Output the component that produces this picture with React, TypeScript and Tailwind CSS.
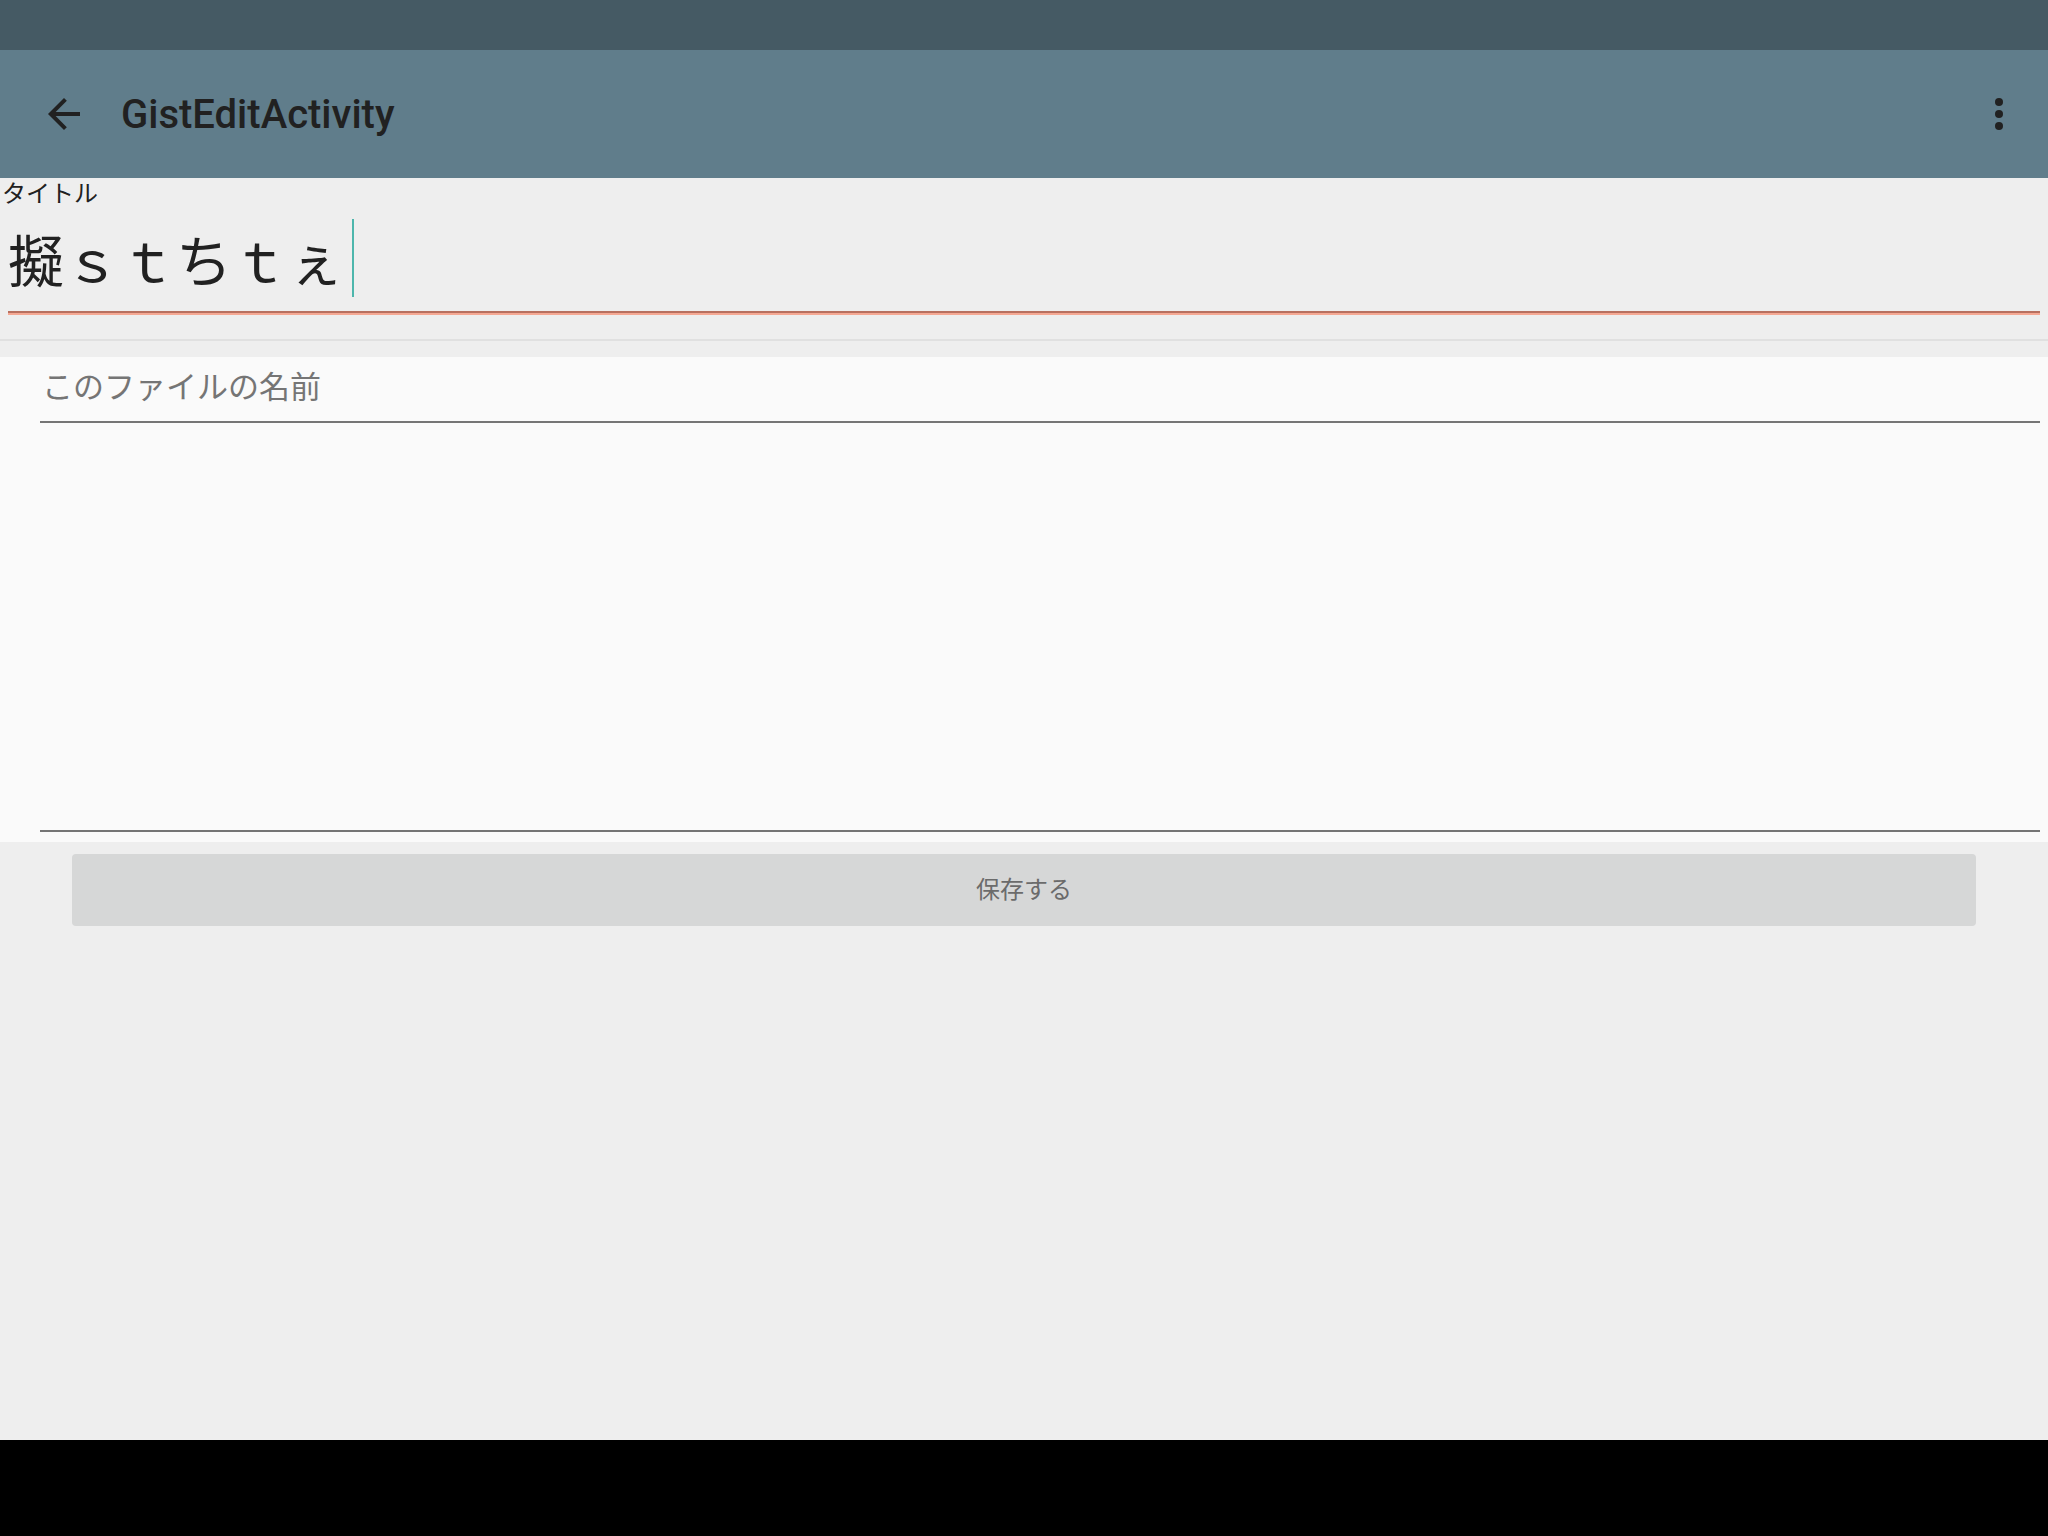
import React from "react";

// Android-style Gist editor screen

const cjk = "font-['Roboto','Noto_Sans_CJK_JP',sans-serif]";

const BackArrow: React.FC = () => (
  <svg width="48" height="48" viewBox="0 0 24 24" className="text-[#212121]">
    <path
      d="M20 11H7.83l5.59-5.59L12 4l-8 8 8 8 1.41-1.41L7.83 13H20v-2z"
      fill="currentColor"
    />
  </svg>
);

const MoreDots: React.FC = () => (
  <svg width="12" height="36" viewBox="0 0 12 36" className="text-[#212121]">
    <circle cx="6" cy="6" r="4" fill="currentColor" />
    <circle cx="6" cy="18" r="4" fill="currentColor" />
    <circle cx="6" cy="30" r="4" fill="currentColor" />
  </svg>
);

export default function App() {
  return (
    <div className={`w-[2048px] h-[1536px] flex flex-col bg-[#eeeeee] ${cjk}`}>
      {/* status bar */}
      <div className="h-[50px] bg-[#455a64]" />

      {/* toolbar */}
      <div className="h-[128px] bg-[#607d8b] flex items-center">
        <div className="w-[40px]" />
        <BackArrow />
        <div className="ml-[33px] text-[40px] font-medium text-[#212121] leading-none pt-[2px]">
          GistEditActivity
        </div>
        <div className="flex-1" />
        <div className="mr-[43px]">
          <MoreDots />
        </div>
      </div>

      {/* content */}
      <div className="flex-1 flex flex-col">
        <div className="h-[32px] pl-[2px] text-[24px] leading-[32px] text-[#212121]">
          タイトル
        </div>

        <div className="mt-[9px] h-[78px] pl-[8px] flex items-center">
          <span className="text-[56px] leading-[78px] text-[#212121] font-['Noto_Sans_CJK_JP',sans-serif]">
            擬ｓｔちｔぇ
          </span>
          <span className="ml-[8px] w-[2px] h-[78px] bg-[#4db6ac]" />
        </div>

        <div className="mt-[14px] mx-[8px] h-[4px] flex flex-col">
          <div className="h-[2px] bg-[#b8705f]" />
          <div className="h-[2px] bg-[#f5a893]" />
        </div>

        <div className="mt-[24px] h-[2px] bg-[#e0e0e0]" />

        {/* file editor */}
        <div className="mt-[16px] h-[485px] bg-[#fafafa] pl-[40px] pr-[8px] pt-[11px] pb-[10px] flex flex-col">
          <div className="h-[40px] pl-[2px] text-[31px] leading-[40px] text-[#757575]">
            このファイルの名前
          </div>
          <div className="mt-[13px] h-[2px] bg-[#757575]" />
          <div className="flex-1" />
          <div className="h-[2px] bg-[#757575]" />
        </div>

        <div className="mt-[12px] ml-[72px] w-[1904px] h-[72px] rounded-[4px] bg-[#d6d7d7] flex items-center justify-center text-[24px] text-[#6b6b6b]">
          保存する
        </div>
      </div>

      {/* nav bar */}
      <div className="h-[96px] bg-black" />
    </div>
  );
}
